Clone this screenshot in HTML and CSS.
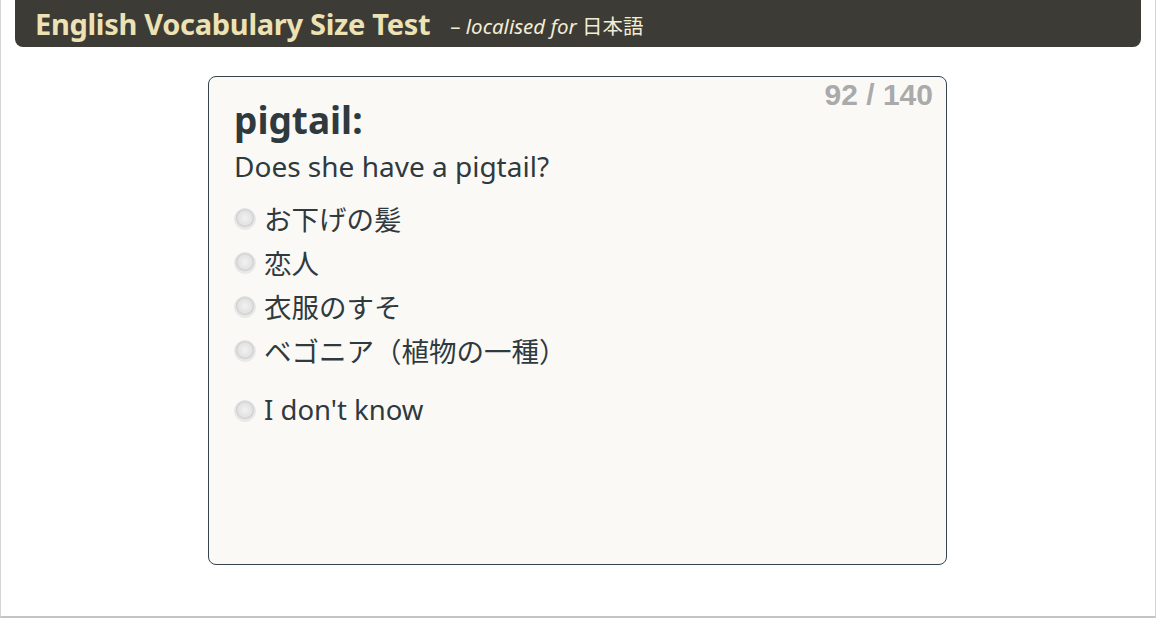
FILE: index.html
```html
<!doctype html>
<html lang="ja">
<head>
    <meta charset="utf-8" />
    <meta name="viewport" content="width=device-width, initial-scale=1" />
    <title>English Vocabulary Size Test</title>
    <link rel="stylesheet" href="styles.css">
</head>
<body>
    <div class="page">
        <!-- Header -->
        <div class="header">
            <h1>English Vocabulary Size Test</h1>
            <span class="locale"><span class="dash">–</span> <em>localised for</em> 日本語</span>
        </div>

        <!-- Question card -->
        <div class="card">
            <div class="counter">92 / 140</div>
            <h2 class="word">pigtail:</h2>
            <p class="sentence">Does she have a pigtail?</p>

            <form class="options">
                <label class="option"><input type="radio" name="answer" /> <span>お下げの髪</span></label>
                <label class="option"><input type="radio" name="answer" /> <span>恋人</span></label>
                <label class="option"><input type="radio" name="answer" /> <span>衣服のすそ</span></label>
                <label class="option"><input type="radio" name="answer" /> <span>ベゴニア（植物の一種）</span></label>
                <label class="option dont-know"><input type="radio" name="answer" /> <span>I don't know</span></label>
            </form>
        </div>
    </div>
</body>
</html>
```

FILE: styles.css
```css
body {
    margin: 0;
    font-family: "Noto Sans", "Noto Sans CJK JP", sans-serif;
    color: #2f3a3f;
    background: white;
}
.page {
    height: 616px;
    border: 1px solid #d4d4d4;
    border-top: none;
    border-bottom: 2px solid #c4c4c4;
}
.header {
    margin: 0 14px;
    height: 47px;
    padding-left: 20px;
    background: #3d3b35;
    border-radius: 0 0 8px 8px;
    display: flex;
    align-items: center;
    gap: 20px;
}
.header h1 {
    margin: 0;
    font-size: 29px;
    font-weight: bold;
    color: #ece2b4;
    letter-spacing: -0.3px;
}
.locale {
    font-size: 20.5px;
    color: #f3edd6;
    margin-top: 3px;
}
.card {
    position: relative;
    width: 739px;
    height: 489px;
    margin: 29px 0 0 207px;
    padding: 0 25px;
    box-sizing: border-box;
    background: #fbf9f6;
    border: 1px solid #37434a;
    border-radius: 8px;
}
.counter {
    position: absolute;
    top: 1px;
    right: 13px;
    font-family: "Liberation Sans", Arial, sans-serif;
    font-size: 30px;
    font-weight: bold;
    color: #aaaaaa;
}
.word {
    margin: 18px 0 0;
    font-size: 37px;
    font-weight: bold;
    line-height: 50px;
}
.sentence {
    margin: 0 0 10px;
    font-size: 28px;
    line-height: 42px;
}
.options {
    display: flex;
    flex-direction: column;
}
.option {
    display: flex;
    align-items: center;
    gap: 8px;
    height: 44px;
    font-size: 27.5px;
}
.option span {
    margin-top: -3px;
}
.option input {
    width: 22px;
    height: 22px;
    margin: 0;
    appearance: none;
    border-radius: 50%;
    border: 1px solid #e6e6e6;
    background: radial-gradient(circle at 50% 45%, #f2f2f2 0, #e2e2e2 48%, #cfcfcf 56%, #e9e9e9 66%, #f7f7f7 100%);
}
.dont-know {
    margin-top: 16px;
}
```
